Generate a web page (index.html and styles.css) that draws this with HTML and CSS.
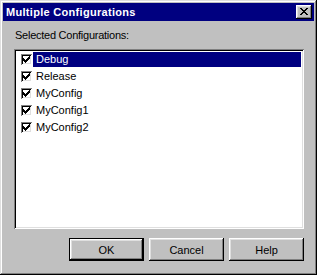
FILE: index.html
```html
<!DOCTYPE html>
<html lang="en">
<head>
    <meta charset="UTF-8">
    <title>Multiple Configurations</title>
    <link rel="stylesheet" href="styles.css">
</head>
<body>
    <div class="window">
        <div class="titlebar">
            <span class="title">Multiple Configurations</span>
            <button class="close" aria-label="Close">
                <svg width="8" height="7" viewBox="0 0 8 7"><path fill="#000" d="M0 0h2v1H0z M6 0h2v1H6z M1 1h2v1H1z M5 1h2v1H5z M2 2h4v1H2z M3 3h2v1H3z M2 4h4v1H2z M1 5h2v1H1z M5 5h2v1H5z M0 6h2v1H0z M6 6h2v1H6z"/></svg>
            </button>
        </div>
        <div class="content">
            <div class="label">Selected Configurations:</div>
            <ul class="checklist">
                <li class="item selected"><span class="check"><svg width="7" height="7" viewBox="0 0 7 7"><path fill="#000" d="M0 2h1v3H0z M1 3h1v3H1z M2 4h1v3H2z M3 3h1v3H3z M4 2h1v3H4z M5 1h1v3H5z M6 0h1v3H6z"/></svg></span><span class="name">Debug</span></li>
                <li class="item"><span class="check"><svg width="7" height="7" viewBox="0 0 7 7"><path fill="#000" d="M0 2h1v3H0z M1 3h1v3H1z M2 4h1v3H2z M3 3h1v3H3z M4 2h1v3H4z M5 1h1v3H5z M6 0h1v3H6z"/></svg></span><span class="name">Release</span></li>
                <li class="item"><span class="check"><svg width="7" height="7" viewBox="0 0 7 7"><path fill="#000" d="M0 2h1v3H0z M1 3h1v3H1z M2 4h1v3H2z M3 3h1v3H3z M4 2h1v3H4z M5 1h1v3H5z M6 0h1v3H6z"/></svg></span><span class="name">MyConfig</span></li>
                <li class="item"><span class="check"><svg width="7" height="7" viewBox="0 0 7 7"><path fill="#000" d="M0 2h1v3H0z M1 3h1v3H1z M2 4h1v3H2z M3 3h1v3H3z M4 2h1v3H4z M5 1h1v3H5z M6 0h1v3H6z"/></svg></span><span class="name">MyConfig1</span></li>
                <li class="item"><span class="check"><svg width="7" height="7" viewBox="0 0 7 7"><path fill="#000" d="M0 2h1v3H0z M1 3h1v3H1z M2 4h1v3H2z M3 3h1v3H3z M4 2h1v3H4z M5 1h1v3H5z M6 0h1v3H6z"/></svg></span><span class="name">MyConfig2</span></li>
            </ul>
            <div class="buttons">
                <button class="btn default">OK</button>
                <button class="btn">Cancel</button>
                <button class="btn">Help</button>
            </div>
        </div>
    </div>
</body>
</html>
```

FILE: styles.css
```css
html, body {
    margin: 0;
    padding: 0;
    background: #c0c0c0;
}
body {
    font-family: "Liberation Sans", Arial, sans-serif;
    font-size: 11px;
    color: #000;
}
.window {
    width: 317px;
    height: 275px;
    box-sizing: border-box;
    padding: 3px;
    background: #c0c0c0;
    box-shadow: inset -1px -1px #000, inset 1px 1px #dfdfdf, inset -2px -2px #808080, inset 2px 2px #fff;
    display: flex;
    flex-direction: column;
}
.titlebar {
    height: 18px;
    background: #000080;
    color: #fff;
    display: flex;
    align-items: center;
    justify-content: space-between;
    padding: 0 2px 0 3px;
}
.title {
    font-weight: bold;
    font-size: 11px;
    letter-spacing: 0.3px;
}
.close {
    width: 16px;
    height: 14px;
    padding: 0;
    border: none;
    background: #c0c0c0;
    box-shadow: inset -1px -1px #000, inset 1px 1px #fff, inset -2px -2px #808080, inset 2px 2px #dfdfdf;
    display: flex;
    align-items: center;
    justify-content: center;
}
.close svg {
    display: block;
    margin: 0 1px 1px 0;
}
.content {
    flex: 1;
    padding: 8px 10px 0 11px;
    display: flex;
    flex-direction: column;
}
.label {
    line-height: 13px;
    padding-left: 1px;
    letter-spacing: -0.25px;
}
.checklist {
    margin: 7px 0 0;
    height: 180px;
    box-sizing: border-box;
    padding: 3px;
    background: #fff;
    list-style: none;
    box-shadow: inset 1px 1px #808080, inset -1px -1px #fff, inset 2px 2px #000, inset -2px -2px #dfdfdf;
}
.item {
    height: 17px;
    display: flex;
    align-items: flex-start;
}
.check {
    width: 11px;
    height: 11px;
    box-sizing: border-box;
    margin: 2px 1px 0 4px;
    background: #fff;
    box-shadow: inset 1px 1px #808080, inset -1px -1px #fff, inset 2px 2px #000, inset -2px -2px #dfdfdf;
    display: flex;
    align-items: center;
    justify-content: center;
}
.check svg {
    display: block;
}
.name {
    flex: 1;
    height: 15px;
    line-height: 15px;
    padding-left: 3px;
}
.item.selected .name {
    background: #000080;
    color: #fff;
}
.buttons {
    display: flex;
    justify-content: flex-end;
    gap: 5px;
    margin-top: 9px;
}
.btn {
    width: 75px;
    height: 23px;
    box-sizing: border-box;
    padding: 0;
    border: none;
    background: #c0c0c0;
    font-family: "Liberation Sans", Arial, sans-serif;
    font-size: 11px;
    color: #000;
    box-shadow: inset -1px -1px #000, inset 1px 1px #fff, inset -2px -2px #808080, inset 2px 2px #dfdfdf;
}
.btn.default {
    border: 1px solid #000;
}
```
